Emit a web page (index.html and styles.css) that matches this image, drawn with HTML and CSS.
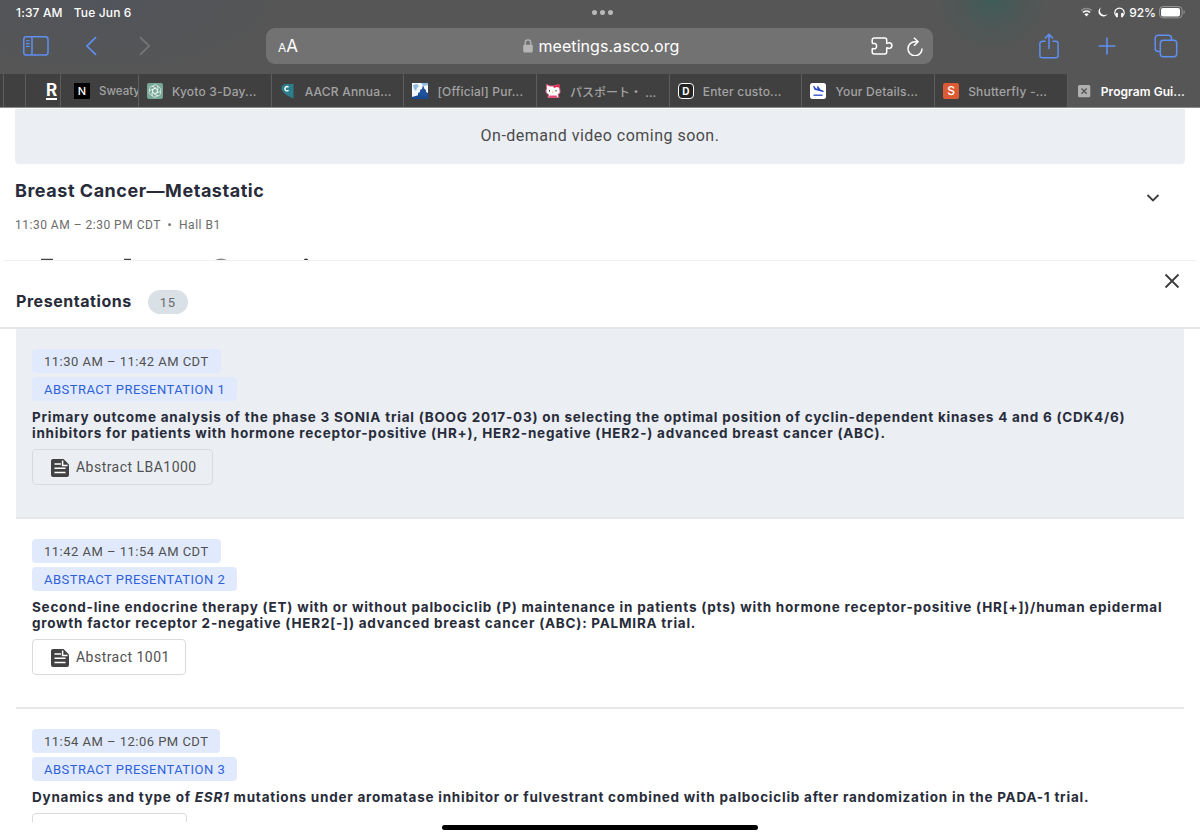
FILE: index.html
```
<!DOCTYPE html>
<html lang="en">
	<head>
		<meta charset="UTF-8">
		<title>Program Guide</title>
		<link rel="stylesheet" href="styles.css">
	</head>
	<body>
		<div class="browser">
			<div class="status">
				<span class="time">1:37 AM</span>
				<span class="date">Tue Jun 6</span>
				<div class="dots"><i></i><i></i><i></i></div>
				<svg class="wifi" width="13" height="10" viewBox="0 0 12 10" fill="none"><path d="M.8 3.6a7.4 7.4 0 0 1 10.4 0" stroke="#8b8b8b" stroke-width="1.6"/><path d="M2.5 5.5a5 5 0 0 1 7 0" stroke="#fff" stroke-width="1.7"/><path d="M6 9.4 3.9 7.2a3 3 0 0 1 4.2 0z" fill="#fff"/></svg>
				<svg class="moon" width="10" height="10" viewBox="0 0 10 10"><path d="M3.300.2a4.900 4.900 0 1 0 6.500 6.500A4.300 4.300 0 0 1 3.300.2z" fill="#fff"/></svg>
				<svg class="phones" width="11" height="11" viewBox="0 0 11 11" fill="none"><path d="M2.8 9.6A4.7 4.7 0 1 1 8.200 9.600" stroke="#fff" stroke-width="1.200"/><rect x="1.900" y="5.700" width="2" height="4.600" rx=".9" fill="#fff"/><rect x="7.100" y="5.700" width="2" height="4.600" rx=".9" fill="#fff"/></svg>
				<span class="pct">92%</span>
				<svg class="battery" width="27" height="13" viewBox="0 0 27 13"><rect x=".6" y=".6" width="22.500" height="11.300" rx="3.300" fill="none" stroke="#999"/><rect x="2" y="2" width="19" height="8.500" rx="2" fill="#fff"/><path d="M24.600 4.300c1.600.6 1.600 3.300 0 3.900z" fill="#999"/></svg>
			</div>
			<div class="toolbar">
				<svg class="sidebar" width="26" height="20" viewBox="0 0 26 20" fill="none" stroke="#5f8ff0" stroke-width="1.500"><rect x=".8" y=".8" width="24.200" height="18.200" rx="2.600"/><path d="M9 1v18"/><path d="M3 4.800h3.600M3 7.600h3.600M3 10.400h3.600" stroke-width="1.100"/></svg>
				<svg class="back" width="13" height="20" viewBox="0 0 13 20" fill="none" stroke="#5f8ff0" stroke-width="1.700"><path d="M11 1.200 2 10l9 8.800"/></svg>
				<svg class="fwd" width="13" height="20" viewBox="0 0 13 20" fill="none" stroke="#777" stroke-width="1.700"><path d="m2 1.200 9 8.800-9 8.800"/></svg>
				<div class="address">
					<div class="aa"><small>A</small>A</div>
					<div class="url">
						<svg width="10" height="14" viewBox="0 0 10 14"><rect x=".2" y="5.800" width="9.600" height="7.600" rx="1.300" fill="#b5b5b5"/><path d="M2.200 6V3.700a2.800 2.800 0 0 1 5.600 0V6" fill="none" stroke="#b5b5b5" stroke-width="1.300"/></svg>
						<span>meetings.asco.org</span>
					</div>
					<svg class="puzzle" width="22" height="18" viewBox="0 0 22 18" fill="none" stroke="#fff" stroke-width="1.500"><path d="M1.200 5.400V3a2 2 0 0 1 2-2h10.500a2 2 0 0 1 2 2v3.300c.8.300 1-.5 2.400-.5a2.700 2.700 0 0 1 0 5.600c-1.400 0-1.600-.8-2.400-.5V15a2 2 0 0 1-2 2H3.200a2 2 0 0 1-2-2v-2.800c0-.9.700-.6 2-.4 1.300.1 2.400-.9 2.400-2.700S4.500 6.300 3.200 6.500s-2 .1-2-1.100z"/></svg>
					<svg class="reload" width="16" height="19" viewBox="0 0 16 19" fill="none" stroke="#fff" stroke-width="1.500"><path d="M10.600 4.700H8A7 7 0 1 0 15 11.500"/><path d="m7 .8 4 3.900-4 4.100"/></svg>
				</div>
				<svg class="share" width="20" height="26" viewBox="0 0 20 26" fill="none" stroke="#5f8ff0" stroke-width="1.500"><path d="M6.500 8.300H3.200A2.300 2.300 0 0 0 .9 10.600v11.800a2.300 2.300 0 0 0 2.300 2.300h13.600a2.300 2.300 0 0 0 2.300-2.300V10.600a2.300 2.300 0 0 0-2.300-2.300h-3.300"/><path d="M10 16V1.500M6 5.400l4-4 4 4"/></svg>
				<svg class="plus" width="18" height="18" viewBox="0 0 18 18" stroke="#5f8ff0" stroke-width="1.600"><path d="M9 .5v17M.5 9h17"/></svg>
				<svg class="copies" width="24" height="24" viewBox="0 0 24 24" fill="none" stroke="#5f8ff0" stroke-width="1.500"><rect x="6.300" y="6.300" width="16.400" height="16.400" rx="3"/><path d="M6.300 17.500H4.200a3 3 0 0 1-3-3V4.200a3 3 0 0 1 3-3h10.300a3 3 0 0 1 3 3v2.100"/></svg>
			</div>
			<div class="tabs">
				<div class="tab t0"></div>
				<div class="tab t1"></div>
				<div class="tab t2"><b>R</b></div>
				<div class="tab t3"><span class="fav black">N</span><span>Sweaty</span></div>
				<div class="tab">
					<svg class="fav" viewBox="0 0 16 16" fill="none"><rect width="16" height="16" rx="2" fill="#76a797"/><g stroke="#e9f2ef" stroke-width=".8"><path id="petal" d="M8 5.300 10.400 6.700V10l2.500-1.500c1.500-1 1.400-3-.1-4L10.500 3.200"/><use href="#petal" transform="rotate(60 8 8)"/><use href="#petal" transform="rotate(120 8 8)"/><use href="#petal" transform="rotate(180 8 8)"/><use href="#petal" transform="rotate(240 8 8)"/><use href="#petal" transform="rotate(300 8 8)"/></g></svg>
					<span>Kyoto 3-Day...</span>
				</div>
				<div class="tab">
					<svg class="fav" viewBox="0 0 16 16"><path d="M13.500 1v14.500C9 14 1.500 9.500 1.500 5.500 1.500 2 4 1 6.500 1z" fill="#2b7f8c"/><path d="M8.500 4.200a2.100 2.100 0 1 0 0 3" fill="none" stroke="#fff" stroke-width="1.300"/></svg>
					<span>AACR Annua...</span>
				</div>
				<div class="tab">
					<svg class="fav" viewBox="0 0 16 16"><rect width="16" height="16" fill="#f4f8fb"/><path d="M1 2l4-1 2 2-2 2-1 3-2-2zM9 0h7v2l-4 1z" fill="#8fbce3"/><path d="M6 15V10l2-1V7l2-1 1-4 1.500 4 1.500 1v2l2 1v5z" fill="#20539f"/><path d="M0 16v-2l7-2 9 2v2z" fill="#184a92"/></svg>
					<span>[Official] Pur...</span>
				</div>
				<div class="tab">
					<svg class="fav" viewBox="0 0 16 16"><path d="M1.500 1.500 5 3h4l5-1.500.8 5c.8 3 0 4-1.800 5l1 3H3l.6-3C.8 10.500.5 8 1.500 6z" fill="#fff" stroke="#e5577b"/><path d="M8 2l3 1 3-2 1 4-3-1-3 1z" fill="#dc224f"/><path d="M4.500 12.500h7l.6 1.800H4z" fill="#e04b70"/><path d="M4.500 7v1.500M11 7v1.500" stroke="#333"/><path d="M7 9h1.500" stroke="#e5b431"/></svg>
					<span class="jp">パスポート・ ...</span>
				</div>
				<div class="tab"><span class="fav dbox">D</span><span>Enter custo...</span></div>
				<div class="tab">
					<svg class="fav" viewBox="0 0 16 16"><rect width="16" height="16" rx="2.500" fill="#fff"/><path d="M3 3l1.500.3 1.300 2 1.700.4L7 3l1.400.5 2 3 3 1.300c.8.500.500 1.300-.5 1.200L4.500 6.800z" fill="#2549c4"/><path d="M3.500 12.200h9" stroke="#2549c4" stroke-width="1.300"/></svg>
					<span>Your Details...</span>
				</div>
				<div class="tab"><span class="fav orange">S</span><span>Shutterfly -...</span></div>
				<div class="tab current">
					<svg class="fav" viewBox="0 0 16 16"><rect x="2" y="2" width="12.300" height="12.300" rx="1.500" fill="#b0b0b0"/><path d="m5.500 5.500 5.200 5.200m0-5.200-5.200 5.200" stroke="#555" stroke-width="1.300"/></svg>
					<span>Program Gui...</span>
				</div>
			</div>
		</div>

		<div class="page">
			<div class="banner">On-demand video coming soon.</div>
			<div class="session">
				<div>
					<h2>Breast Cancer—Metastatic</h2>
					<p>11:30 AM – 2:30 PM CDT &nbsp;•&nbsp; Hall B1</p>
				</div>
				<svg class="chevron" width="14" height="10" viewBox="0 0 14 10" fill="none" stroke="#3c3c3c" stroke-width="1.800"><path d="m1.500 2 5.500 5.500L12.500 2"/></svg>
			</div>
			<!-- tops of the row that the sheet covers -->
			<svg class="peek" width="400" height="3" viewBox="0 0 400 3"><path d="M41 1.500h12M124 1.500h7" stroke="#444" stroke-width="1.600"/><path d="M215 3q6-3.500 12 0" fill="none" stroke="#888" stroke-width="1.600"/><circle cx="306" cy="2.600" r="2.200" fill="#333"/></svg>
		</div>

		<div class="sheet">
			<div class="sheet-head">
				<h3>Presentations</h3>
				<span class="count">15</span>
				<svg class="close" width="16" height="16" viewBox="0 0 16 16" stroke="#3c3c3c" stroke-width="1.800"><path d="m1.500 1.500 13 13m0-13-13 13"/></svg>
			</div>
			<div class="list">
				<div class="item on">
					<span class="tag">11:30 AM – 11:42 AM CDT</span>
					<span class="tag blue">ABSTRACT PRESENTATION 1</span>
					<h4>Primary outcome analysis of the phase 3 SONIA trial (BOOG 2017-03) on selecting the optimal position of cyclin-dependent kinases 4 and 6 (CDK4/6)<br>inhibitors for patients with hormone receptor-positive (HR+), HER2-negative (HER2-) advanced breast cancer (ABC).</h4>
					<div class="btn"><svg width="18" height="18" viewBox="0 0 18 18"><path d="M2 0h10.500L18 5.500V16a2 2 0 0 1-2 2H2a2 2 0 0 1-2-2V2a2 2 0 0 1 2-2z" fill="#424242"/><path d="M3.500 5H10M3.500 9.300h11M3.500 13.600h11M11.600 1.400v5h5" fill="none" stroke="#fff" stroke-width="1.500"/></svg><span>Abstract LBA1000</span></div>
				</div>
				<div class="item">
					<span class="tag">11:42 AM – 11:54 AM CDT</span>
					<span class="tag blue">ABSTRACT PRESENTATION 2</span>
					<h4>Second-line endocrine therapy (ET) with or without palbociclib (P) maintenance in patients (pts) with hormone receptor-positive (HR[+])/human epidermal<br>growth factor receptor 2-negative (HER2[-]) advanced breast cancer (ABC): PALMIRA trial.</h4>
					<div class="btn"><svg width="18" height="18" viewBox="0 0 18 18"><path d="M2 0h10.500L18 5.500V16a2 2 0 0 1-2 2H2a2 2 0 0 1-2-2V2a2 2 0 0 1 2-2z" fill="#424242"/><path d="M3.500 5H10M3.500 9.300h11M3.500 13.600h11M11.600 1.400v5h5" fill="none" stroke="#fff" stroke-width="1.500"/></svg><span>Abstract 1001</span></div>
				</div>
				<div class="item">
					<span class="tag">11:54 AM – 12:06 PM CDT</span>
					<span class="tag blue">ABSTRACT PRESENTATION 3</span>
					<h4>Dynamics and type of <em>ESR1</em> mutations under aromatase inhibitor or fulvestrant combined with palbociclib after randomization in the PADA-1 trial.</h4>
					<div class="btn short"></div>
				</div>
			</div>
			<div class="home"></div>
		</div>
	</body>
</html>
```
FILE: styles.css
```
*{box-sizing:border-box;}
body,h2,h3,h4,p{margin:0;padding:0;}
body{width:1200px;height:838px;overflow:hidden;display:flex;flex-direction:column;background:#fff;font-family:Roboto,"Noto Sans CJK JP",sans-serif;color:#424242;}
svg{display:block;flex:none;}

/* browser chrome */
.browser{height:108px;flex:none;border-bottom:1px solid #8c8c8c;font-family:Inter,"Noto Sans CJK JP",sans-serif;color:#fff;background:radial-gradient(ellipse 56px 52px at 992px 0,#3f5c58 0,rgba(72,88,86,.6) 55%,rgba(86,86,86,0) 100%),radial-gradient(ellipse 200px 80px at 100px 0,#51545a,rgba(86,86,86,0)),#565656;}
.status{height:24px;display:flex;align-items:center;padding:0 14px 0 16px;font-size:12px;font-weight:500;}
.date{margin-left:11px;}
.dots{margin-left:460px;display:flex;gap:3px;}
.dots i{width:5px;height:5px;border-radius:50%;background:#b9b9b9;}
.wifi{margin-left:auto;}
.moon{margin-left:5px;}
.phones{margin-left:6px;}
.pct{margin:0 3px 0 4px;}
.toolbar{height:50px;display:flex;align-items:center;padding:0 22px 6px;}
.sidebar{margin-left:1px;}
.back{margin-left:36px;}
.fwd{margin-left:40px;}
.address{width:667px;height:36px;margin-left:115px;border-radius:9px;background:#727272;display:grid;grid-template-columns:96px 1fr 67px 29px;align-items:center;}
.aa{padding-left:12px;font-size:17px;}
.aa small{font-size:12px;}
.url{display:flex;align-items:center;justify-content:center;gap:6px;font-size:16px;letter-spacing:.05px;padding-left:3px;}
.puzzle{margin-left:34px;}
.reload{margin-left:3px;}
.share{margin-left:106px;}
.plus{margin-left:39px;}
.copies{margin-left:38px;}
.time,.date{letter-spacing:.15px;}
.tabs{height:33px;display:flex;}
.tab{width:132.700px;flex:none;display:flex;align-items:center;gap:9px;padding:1px 0 0 8px;background:#404040;border-right:1px solid #5d5d5d;color:#a3a3a3;font-size:12px;font-weight:500;letter-spacing:.2px;overflow:hidden;white-space:nowrap;}
.t0{width:4px;padding:0;}
.t1{width:22px;}
.t2{width:35px;padding-left:20px;color:#fff;font-size:17px;}
.t2 b{line-height:15px;border-bottom:2px solid #fff;}
.t3{width:78px;padding-left:13px;}
.t3 span+span{font-size:11.500px;letter-spacing:0;}
.jp{letter-spacing:0;}
.fav{width:16px;height:16px;flex:none;display:block;text-align:center;line-height:16px;font-size:11px;letter-spacing:0;color:#fff;}
.black{background:#000;}
.dbox{background:#242424;border:1px solid #fff;border-radius:4px;line-height:14px;font-size:10px;font-weight:700;}
.orange{background:#dc5a34;border-radius:2px;font-size:12px;}
.current{background:none;border:0;color:#fff;font-weight:600;letter-spacing:.05px;}

/* page */
.page{height:153px;flex:none;padding:1px 15px 0 15px;}
.banner{height:55px;background:#ebeff4;border-radius:0 0 4px 4px;text-align:center;font-size:16px;line-height:54px;letter-spacing:.48px;color:#4a4a4a;}
.session{display:flex;justify-content:space-between;height:95px;}
h2{margin-top:16px;font:700 18px/22px Inter,sans-serif;letter-spacing:.53px;color:#282c3a;}
.session p{margin-top:16px;font-size:12px;line-height:15px;letter-spacing:.5px;color:#6b6b6b;}
.chevron{margin:29px 25px 0 0;}
.peek{margin-left:-15px;margin-top:-1px;}

/* bottom sheet */
.sheet{flex:1;display:flex;flex-direction:column;min-height:0;background:#fff;border-top:1px solid #f1f1f3;border-radius:6px 6px 0 0;margin-top:-1px;}
.sheet-head{height:68px;flex:none;display:flex;align-items:flex-start;padding:29px 20px 0 16px;border-bottom:2px solid #e4e6ea;}
h3{font:700 16px/22px Inter,sans-serif;letter-spacing:.55px;color:#282c3a;}
.count{width:40px;height:24px;margin-left:16px;border-radius:12px;background:#d9e0e6;text-align:center;font-size:13px;line-height:25px;letter-spacing:.8px;color:#6b6b6b;}
.close{margin:-17px 0 0 auto;}
.list{height:493px;overflow:hidden;padding:0 16px;}
.item{height:190px;display:flex;flex-direction:column;align-items:flex-start;padding:20px 0 0 16px;border-bottom:2px solid #e6e7e9;}
.on{background:#ebeff4;}
.tag{height:24px;flex:none;margin-bottom:4px;padding:0 12px;border-radius:4px;background:#e1eafc;font-size:13px;line-height:25px;letter-spacing:.48px;color:#505050;}
.blue{color:#2f62d9;}
h4{margin-top:4px;font:700 13.500px/16px Inter,sans-serif;letter-spacing:.765px;color:#282c3a;white-space:nowrap;}
.btn{height:36px;flex:none;margin-top:8px;padding:0 15px 0 18px;display:flex;align-items:center;gap:7px;border:1px solid #d8dade;border-radius:4px;font-size:14px;letter-spacing:.47px;color:#505050;}
.btn span{margin-top:-1px;}
.btn svg{margin-top:1px;}
.short{width:155px;}
.home{width:316px;height:5px;flex:none;margin:3px auto 0;border-radius:3px;background:#000;}
```
